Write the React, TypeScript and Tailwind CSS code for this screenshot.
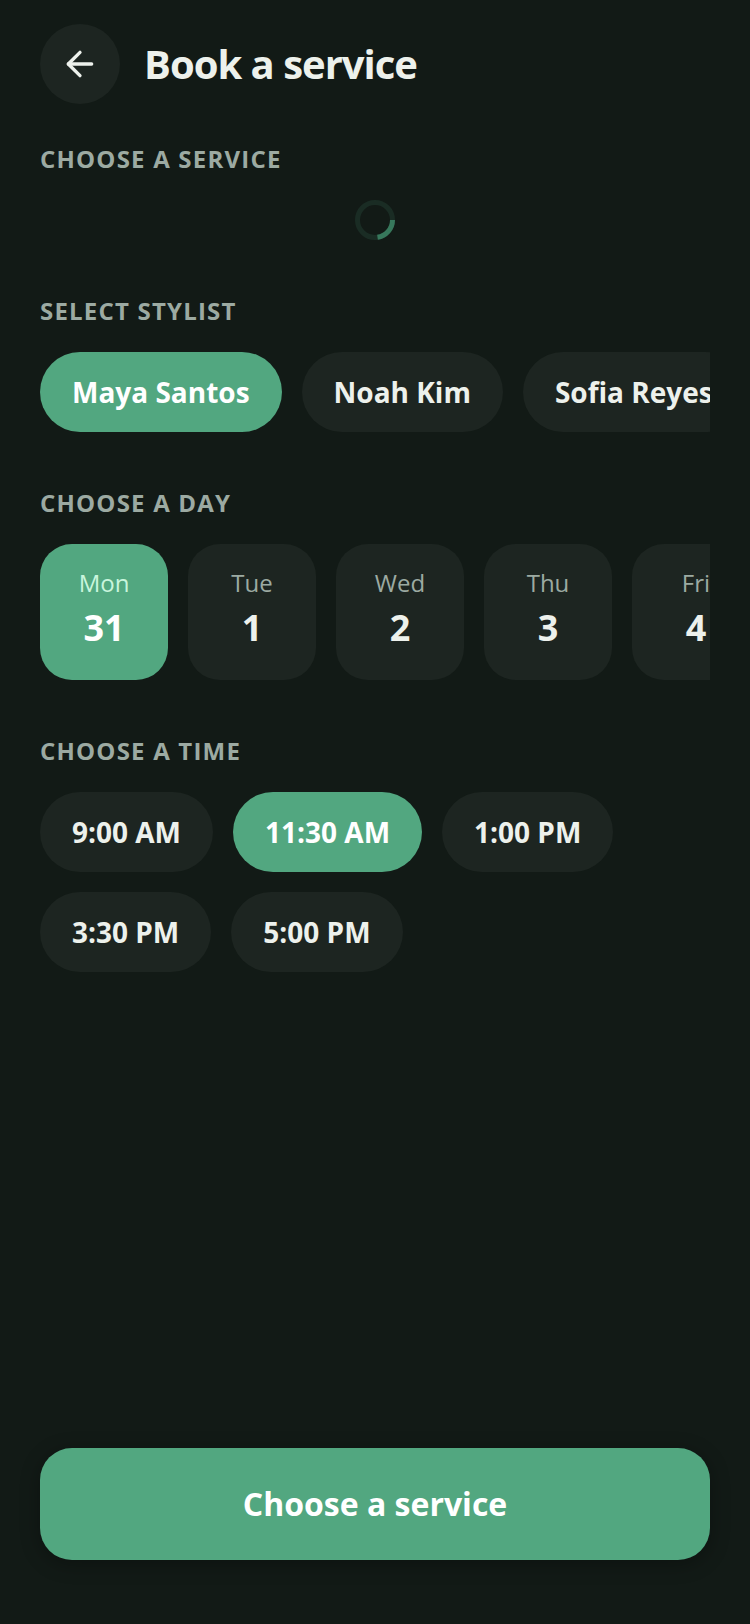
import { useState } from "react";
import { clsx } from "clsx";
import { ArrowLeft } from "lucide-react";

const stylists = ["Maya Santos", "Noah Kim", "Sofia Reyes"];

const days = [
  { label: "Mon", date: 31 },
  { label: "Tue", date: 1 },
  { label: "Wed", date: 2 },
  { label: "Thu", date: 3 },
  { label: "Fri", date: 4 },
];

const times = ["9:00 AM", "11:30 AM", "1:00 PM", "3:30 PM", "5:00 PM"];

interface SectionProps {
  title: string;
  children: React.ReactNode;
}

function Section({ title, children }: SectionProps) {
  return (
    <section className="flex flex-col gap-[26px]">
      <h2 className="text-2xl leading-[30px] font-bold tracking-wider text-[#9caaa2] uppercase">
        {title}
      </h2>
      {children}
    </section>
  );
}

interface ChipProps {
  label: string;
  active: boolean;
  onClick: () => void;
}

function Chip({ label, active, onClick }: ChipProps) {
  return (
    <button
      type="button"
      aria-pressed={active}
      onClick={onClick}
      className={clsx(
        "h-20 shrink-0 rounded-full px-8 text-[28px] font-bold whitespace-nowrap",
        active ? "bg-[#52a780] text-white" : "bg-[#1d2521] text-[#edf1ec]"
      )}
    >
      {label}
    </button>
  );
}

export default function App() {
  const [stylist, setStylist] = useState("Maya Santos");
  const [day, setDay] = useState(31);
  const [time, setTime] = useState("11:30 AM");

  return (
    <div className="flex min-h-screen flex-col bg-[#121a16] px-10 pt-6 pb-16 font-['Open_Sans',sans-serif] text-[#edf1ec]">
      <header className="flex items-center gap-6">
        <button
          type="button"
          aria-label="Go back"
          className="flex size-20 items-center justify-center rounded-full bg-[#1d2521]"
        >
          <ArrowLeft className="size-10" />
        </button>
        <h1 className="text-[40px] font-bold tracking-[-1px]">Book a service</h1>
      </header>

      <main className="mt-10 flex flex-1 flex-col gap-14">
        <Section title="Choose a service">
          <div role="status" aria-label="Loading services" className="flex justify-center">
            <svg className="size-10" viewBox="0 0 40 40" fill="none" strokeWidth="5">
              <circle cx="20" cy="20" r="17.5" stroke="#1a2c24" />
              <path d="M37.5 20A17.5 17.5 0 0 1 22.5 37.3" stroke="#37785c" />
            </svg>
          </div>
        </Section>

        <Section title="Select stylist">
          <div className="flex gap-5 overflow-x-auto [scrollbar-width:none]">
            {stylists.map((name) => (
              <Chip key={name} label={name} active={name === stylist} onClick={() => setStylist(name)} />
            ))}
          </div>
        </Section>

        <Section title="Choose a day">
          <div className="flex gap-5 overflow-x-auto [scrollbar-width:none]">
            {days.map(({ label, date }) => (
              <button
                key={date}
                type="button"
                aria-pressed={date === day}
                onClick={() => setDay(date)}
                className={clsx(
                  "flex h-34 w-32 shrink-0 flex-col items-center gap-2 rounded-[32px] pt-6",
                  date === day ? "bg-[#52a780] text-white" : "bg-[#1d2521]"
                )}
              >
                <span className={clsx("text-2xl leading-[30px]", date === day ? "text-[#c9f5dd]" : "text-[#9caaa2]")}>
                  {label}
                </span>
                <span className="text-4xl leading-11 font-bold">{date}</span>
              </button>
            ))}
          </div>
        </Section>

        <Section title="Choose a time">
          <div className="flex flex-wrap gap-5">
            {times.map((slot) => (
              <Chip key={slot} label={slot} active={slot === time} onClick={() => setTime(slot)} />
            ))}
          </div>
        </Section>
      </main>

      <button
        type="button"
        className="h-28 w-full rounded-[32px] bg-[#52a780] text-[32px] font-bold text-white shadow-[0_4px_20px_rgba(0,0,0,0.3)]"
      >
        Choose a service
      </button>
    </div>
  );
}
